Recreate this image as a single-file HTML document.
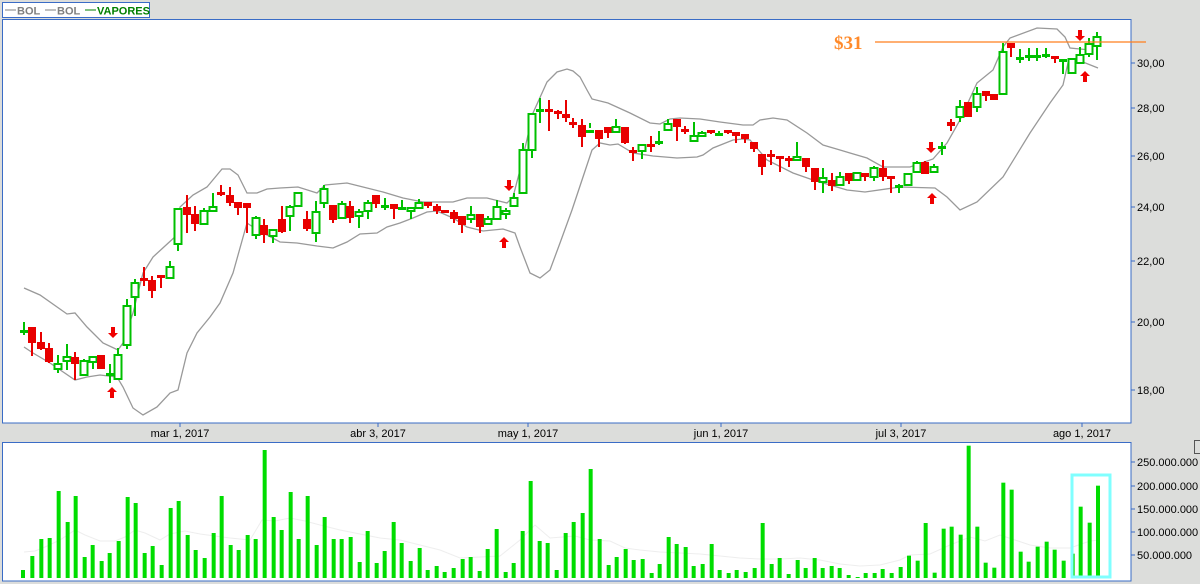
<!DOCTYPE html>
<html><head><meta charset="utf-8"><style>
html,body{margin:0;padding:0;background:#dcdddb;width:1200px;height:584px;overflow:hidden}
svg{display:block}
text{font-family:"Liberation Sans",sans-serif}
</style></head><body>
<svg id="s" width="1200" height="584" xmlns="http://www.w3.org/2000/svg">
<rect x="0" y="0" width="1200" height="584" fill="#dcdddb"/>
<rect x="2.5" y="2.5" width="147" height="15" fill="#fff" stroke="#3a6cc6" stroke-width="1"/>
<line x1="5" y1="10" x2="16" y2="10" stroke="#808080"/>
<text x="17" y="14.5" font-size="11" font-weight="bold" fill="#808080">BOL</text>
<line x1="45" y1="10" x2="56" y2="10" stroke="#808080"/>
<text x="57" y="14.5" font-size="11" font-weight="bold" fill="#808080">BOL</text>
<line x1="85" y1="10" x2="96" y2="10" stroke="#008000"/>
<text x="97" y="14.5" font-size="11" font-weight="bold" fill="#008000">VAPORES</text>
<rect x="2.5" y="19.5" width="1128.5" height="403.5" fill="#fff" stroke="#3a6cc6" stroke-width="1"/>
<rect x="2.5" y="442.5" width="1128.5" height="138.5" fill="#fff" stroke="#3a6cc6" stroke-width="1"/>
<rect x="1194.5" y="440.5" width="6" height="13" fill="none" stroke="#555" stroke-width="1"/>
<g id="g"></g>
</svg>
<script>
var NS="http://www.w3.org/2000/svg",g=document.getElementById('g');
function el(t,a,txt){var e=document.createElementNS(NS,t);for(var k in a)e.setAttribute(k,a[k]);if(txt!=null)e.textContent=txt;g.appendChild(e);return e;}
var up=[[24,288],[40,295],[67,314],[75,313],[87,327],[103,343],[118,350],[123,343],[133,313],[143,273],[153,257],[177,235],[180,207],[193,195],[207,187],[222,169],[230,169],[238,175],[247,193],[257,193],[267,189],[280,188],[298,187],[317,193],[325,185],[347,183],[363,187],[383,192],[403,198],[423,202],[453,202],[467,198],[487,198],[507,203],[513,197],[520,170],[533,113],[547,82],[557,72],[567,69],[573,71],[580,77],[587,90],[592,99],[608,103],[630,113],[650,123],[660,124],[670,119],[680,118],[700,119],[720,122],[743,125],[753,125],[760,120],[773,118],[787,120],[807,133],[823,145],[840,150],[850,153],[867,158],[883,167],[910,167],[933,159],[947,143],[960,120],[977,83],[993,70],[1003,47],[1010,38],[1037,28],[1057,29],[1065,37],[1070,48],[1090,50],[1097,40]];
var lo=[[24,347],[33,353],[50,363],[75,380],[87,377],[100,375],[117,377],[123,387],[133,408],[143,415],[157,407],[170,393],[178,390],[187,353],[197,333],[210,317],[220,303],[233,273],[247,223],[253,227],[267,235],[280,242],[297,243],[317,246],[333,248],[347,242],[360,234],[377,233],[387,227],[400,223],[413,218],[427,212],[437,211],[453,218],[467,227],[483,231],[503,229],[515,233],[520,247],[530,273],[540,278],[550,270],[560,243],[572,210],[583,177],[592,150],[600,143],[610,145],[618,144],[633,153],[653,156],[677,158],[697,157],[703,155],[713,148],[733,140],[743,139],[750,140],[767,160],[793,173],[813,180],[847,190],[865,192],[900,187],[935,188],[947,197],[960,210],[977,202],[1003,177],[1030,133],[1050,103],[1063,85],[1068,63],[1083,62],[1098,68]];
function pl(p){return p.map(function(a){return a.join(',')}).join(' ')}
el('polyline',{points:pl(up),fill:'none',stroke:'#999','stroke-width':1.3});
el('polyline',{points:pl(lo),fill:'none',stroke:'#999','stroke-width':1.3});
var C=[[24,331,331,322,335,'g'],[32,327,343,327,356,'r'],[41,342,349,332,350,'r'],[49,348,362,343,363,'r'],[58,364,369,355,373,'g'],[67,357,361,344,370,'g'],[75,357,364,352,380,'r'],[84,361,375,359,375,'g'],[93,357,362,357,369,'g'],[101,355,369,355,369,'r'],[110,374,376,364,383,'g'],[118,355,379,348,379,'g'],[127,306,345,299,349,'g'],[135,283,297,279,316,'g'],[144,279,281,267,286,'r'],[152,280,291,276,298,'r'],[161,276,278,276,288,'r'],[170,267,278,261,278,'g'],[178,209,244,208,251,'g'],[187,207,215,195,233,'r'],[195,214,224,206,231,'r'],[204,211,224,208,224,'g'],[213,207,211,193,211,'g'],[221,193,195,185,196,'r'],[230,195,203,187,206,'r'],[238,202,208,202,215,'r'],[247,203,208,203,233,'r'],[256,218,235,216,239,'g'],[264,225,235,219,243,'r'],[273,230,236,230,243,'g'],[282,219,232,206,233,'r'],[290,207,216,205,231,'g'],[298,193,206,193,206,'g'],[307,219,229,211,231,'r'],[316,212,233,201,242,'g'],[324,189,203,185,208,'g'],[333,205,220,205,223,'r'],[342,204,218,201,218,'g'],[350,206,218,201,223,'r'],[359,212,216,209,228,'g'],[368,203,211,200,219,'g'],[376,195,204,195,208,'r'],[385,206,206,198,210,'g'],[394,204,209,204,219,'r'],[402,208,208,200,208,'g'],[411,208,211,208,219,'g'],[419,203,208,199,208,'g'],[428,202,206,202,208,'r'],[437,206,211,204,214,'r'],[445,211,213,211,213,'r'],[454,212,219,210,223,'r'],[462,216,225,216,233,'r'],[471,215,219,206,223,'g'],[480,214,227,214,233,'r'],[488,219,224,216,224,'g'],[497,207,219,200,219,'g'],[506,211,214,208,219,'g'],[514,198,206,193,206,'g'],[523,150,193,143,193,'g'],[532,114,150,113,158,'g'],[540,110,110,98,123,'g'],[549,109,112,100,131,'r'],[558,112,114,110,119,'r'],[566,114,118,100,122,'r'],[573,123,124,118,128,'r'],[582,125,137,119,147,'r'],[590,131,131,123,128,'g'],[599,130,139,130,147,'r'],[608,127,133,127,138,'r'],[616,127,132,119,132,'g'],[625,127,143,127,144,'r'],[633,150,153,147,161,'r'],[642,145,151,145,159,'g'],[651,145,147,136,152,'r'],[659,142,142,131,145,'g'],[668,124,130,119,130,'g'],[677,119,127,119,141,'r'],[685,130,130,126,134,'r'],[694,136,141,122,141,'g'],[702,133,136,131,136,'g'],[711,130,133,130,134,'r'],[719,134,134,131,135,'g'],[728,131,133,130,134,'r'],[736,132,136,132,143,'r'],[745,134,139,134,143,'r'],[754,142,149,142,152,'r'],[762,154,167,154,175,'r'],[771,155,157,150,165,'r'],[780,157,159,157,172,'r'],[789,159,161,156,167,'r'],[797,157,160,142,160,'g'],[806,158,167,158,172,'r'],[815,168,182,168,190,'r'],[823,178,182,168,193,'g'],[832,180,186,173,191,'r'],[840,177,185,172,185,'g'],[849,173,181,173,184,'r'],[857,173,180,173,180,'g'],[865,173,177,173,181,'r'],[874,168,177,166,181,'g'],[883,168,177,160,181,'r'],[891,177,177,177,193,'r'],[899,186,186,184,193,'g'],[908,174,185,174,185,'g'],[917,163,172,161,172,'g'],[925,162,174,161,174,'r'],[934,167,172,164,172,'g'],[942,147,147,142,155,'g'],[951,122,126,119,131,'r'],[960,107,117,100,122,'g'],[968,102,117,102,117,'r'],[977,94,107,87,112,'g'],[986,91,96,91,101,'r'],[994,94,100,94,100,'r'],[1003,52,94,43,94,'g'],[1011,43,48,43,57,'r'],[1020,58,58,49,63,'g'],[1029,56,56,48,61,'g'],[1037,56,56,48,61,'g'],[1046,55,55,48,58,'g'],[1055,57,59,57,63,'r'],[1063,60,60,60,74,'g'],[1072,59,73,59,73,'g'],[1080,55,63,47,63,'g'],[1089,44,54,38,57,'g'],[1097,37,46,32,60,'g']];
C.forEach(function(c){var x=c[0],t=c[1],b=c[2],col=c[5]=='g'?'#00c000':'#e80000';
 el('rect',{x:x-1,y:c[3],width:2,height:Math.max(1,c[4]-c[3]),fill:col});
 if(b-t<3){el('rect',{x:x-4,y:t-1,width:8,height:3,fill:col});}
 else if(c[5]=='g'){el('rect',{x:x-3.5,y:t,width:7,height:b-t,fill:'#fff',stroke:col,'stroke-width':2});}
 else{el('rect',{x:x-4,y:t,width:8,height:b-t,fill:col});}
});
function arrow(x,y,dn){var p=dn?[[x-2,y-6],[x+2,y-6],[x+2,y],[x+5,y],[x,y+5],[x-5,y],[x-2,y]]:[[x-2,y+6],[x+2,y+6],[x+2,y],[x+5,y],[x,y-5],[x-5,y],[x-2,y]];el('polygon',{points:pl(p),fill:'#f00000'});}
arrow(113,333,1);arrow(509,186,1);arrow(931,148,1);arrow(1080,36,1);
arrow(112,392,0);arrow(504,242,0);arrow(932,198,0);arrow(1085,76,0);
el('line',{x1:875,y1:42,x2:1146,y2:42,stroke:'#ff7f1e','stroke-width':1.3});
el('text',{x:834,y:49,style:'font-family:"Liberation Serif",serif;font-size:19px;font-weight:bold',fill:'#ff8a2a'},'$31');
[[30,63],[28,108],[26,156],[24,207],[22,261],[20,322],[18,390]].forEach(function(a){el('line',{x1:1131,y1:a[1],x2:1135,y2:a[1],stroke:'#3a6cc6'});el('text',{x:1137,y:a[1]+4,'font-size':11,fill:'#000'},a[0]+',00');});
[['mar 1, 2017',180],['abr 3, 2017',378],['may 1, 2017',528],['jun 1, 2017',721],['jul 3, 2017',901],['ago 1, 2017',1082]].forEach(function(a){el('line',{x1:a[1],y1:423,x2:a[1],y2:427,stroke:'#3a6cc6'});el('text',{x:a[1],y:437,'font-size':11,'text-anchor':'middle',fill:'#000'},a[0]);});
[['250.000.000',462],['200.000.000',486],['150.000.000',509],['100.000.000',532],['50.000.000',555]].forEach(function(a){el('line',{x1:1131,y1:a[1],x2:1135,y2:a[1],stroke:'#3a6cc6'});el('text',{x:1137,y:a[1]+4,'font-size':11,fill:'#000'},a[0]);});
el('polyline',{points:'24,552 35,551 45,547 60,540 75,530 85,535 100,541 115,541 125,537 135,530 145,533 160,540 170,534 185,531 200,534 215,536 230,538 250,540 262,520 275,521 290,518 305,521 320,525 340,530 360,534 380,538 400,540 420,545 440,550 460,558 480,557 500,556 520,540 535,525 550,538 575,536 590,540 610,541 625,548 640,550 660,552 680,553 700,554 720,556 740,558 760,559 780,559 800,558 820,560 840,564 860,566 880,565 900,560 910,555 930,554 950,545 970,537 985,541 1000,535 1015,540 1030,545 1050,548 1070,548 1090,541 1100,540',fill:'none',stroke:'#eee','stroke-width':1});
var V=[[69,390],[97,348],[124,297],[149,294],[176,153],[203,246],[227,168],[254,351],[278,315],[305,363],[329,339],[356,303],[383,171],[407,189],[434,339],[458,318],[485,375],[512,204],[536,183],[563,285],[587,330],[614,354],[641,279],[665,168],[692,315],[716,330],[743,285],[767,297],[794,30],[821,231],[845,270],[872,156],[896,297],[923,168],[950,315],[974,231],[1001,297],[1025,297],[1052,291],[1079,366],[1103,273],[1130,369],[1154,333],[1181,246],[1205,309],[1232,363],[1259,324],[1283,390],[1310,378],[1334,396],[1361,384]].map(function(a){return[a[0]/3,440+a[1]/3]});
[[38,357],[62,351],[89,393],[113,327],[140,267],[167,396],[191,369],[218,273],[242,123],[269,303],[293,309],[320,390],[347,279],[371,246],[398,219],[422,87],[449,297],[476,375],[500,351],[527,327],[551,360],[578,357],[605,399],[629,372],[656,291],[680,312],[707,321],[731,378],[758,372],[785,312],[809,390],[836,399],[860,390],[887,396],[914,384],[938,249],[965,372],[989,354],[1016,402],[1043,360],[1067,384],[1094,354],[1118,384],[1145,378],[1169,384],[1196,405],[1223,411],[1247,399],[1274,399],[1298,387],[1325,399],[1352,381]].forEach(function(a){V.push([450+a[0]/3,440+a[1]/3]);});
[[27,467],[53,482],[77,369],[104,518],[131,386],[155,380],[182,404],[206,137],[232,380],[257,488],[283,503],[310,248],[335,269],[362,455],[386,485],[413,440],[440,425],[464,449],[491,482],[518,461],[542,320],[569,368],[594,257]].forEach(function(a){V.push([900+a[0]/3,400+a[1]/3]);});
V.forEach(function(v){el('rect',{x:v[0]-2,y:v[1],width:4,height:578-v[1],fill:'#00dd00'});});
el('rect',{x:1072,y:475,width:38,height:102,fill:'none',stroke:'#80ffff','stroke-width':3});
</script>
</body></html>
